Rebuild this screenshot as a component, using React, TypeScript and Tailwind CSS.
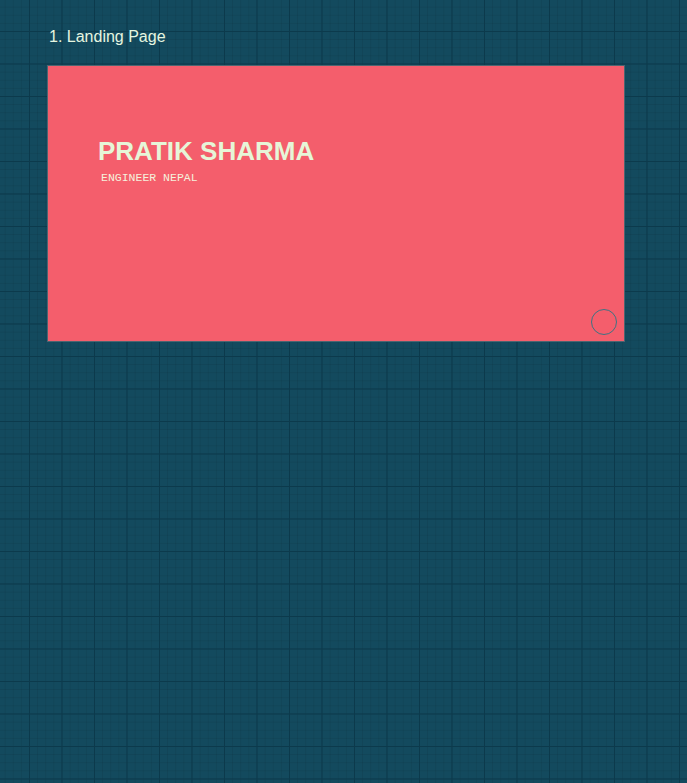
const App = () => {
  return (
    <div className="min-h-screen w-full bg-[#134a5e] bg-[linear-gradient(#0c3a4c_1px,transparent_1px),linear-gradient(90deg,#0c3a4c_1px,transparent_1px),linear-gradient(rgba(0,0,0,0.07)_1px,transparent_1px),linear-gradient(90deg,rgba(0,0,0,0.07)_1px,transparent_1px)] bg-[length:32.5px_32.5px,32.5px_32.5px,8.125px_8.125px,8.125px_8.125px] bg-[position:29px_31px,29px_31px,29px_31px,29px_31px] pt-[28px] pl-[47px] font-['Liberation_Sans',Arial,sans-serif]">
      <h2 className="pl-[2px] text-[16px] leading-[18px] text-[#e6f6e0]">1. Landing Page</h2>
      <section className="relative mt-[19px] flex h-[277px] w-[578px] flex-col border border-[#4d6470] bg-[#f45e6c] pl-[50px] pt-[70px]">
        <h1 className="text-[26px] font-bold leading-[30px] text-[#e6f6d8]">PRATIK SHARMA</h1>
        <p className="mt-[5px] pl-[3px] font-['Liberation_Mono','Courier_New',monospace] text-[11.5px] leading-[13px] text-[#f5f0dc]">
          ENGINEER NEPAL
        </p>
        <button
          aria-label="next"
          className="absolute bottom-[6px] right-[7px] h-[26px] w-[26px] rounded-full border-[1.5px] border-[#3d7383]"
        />
      </section>
    </div>
  );
};

export default App;
